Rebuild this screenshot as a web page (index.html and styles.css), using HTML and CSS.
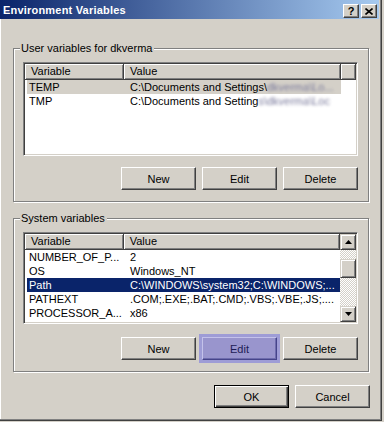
FILE: index.html
```html
<!DOCTYPE html>
<html lang="en">

<head>
    <meta charset="UTF-8">
    <meta name="viewport" content="width=device-width, initial-scale=1.0">
    <title>Environment Variables</title>
    <link rel="stylesheet" href="styles.css">
</head>

<body>
    <div class="window">
        <div class="titlebar">
            <span class="title">Environment Variables</span>
            <div class="caption">
                <div class="cap-btn help">?</div>
                <div class="cap-btn close">
                    <svg width="8" height="7" viewBox="0 0 8 7"><path d="M0.5 0.5L7.5 6.5M7.5 0.5L0.5 6.5" stroke="#000" stroke-width="1.6" fill="none"/></svg>
                </div>
            </div>
        </div>

        <div class="content">
            <!-- user variables -->
            <div class="group">
                <span class="group-label">User variables for dkverma</span>
                <div class="listview">
                    <div class="lv-main">
                        <div class="lv-head">
                            <div class="col-h c1">Variable</div>
                            <div class="col-h c2">Value</div>
                            <div class="col-h rest"></div>
                        </div>
                        <div class="row grey">
                            <span class="c1">TEMP</span>
                            <span class="c2">C:\Documents and Settings\<span class="smudge">dkverma\Lo...</span></span>
                        </div>
                        <div class="row">
                            <span class="c1">TMP</span>
                            <span class="c2">C:\Documents and Setting<span class="smudge">s\dkverma\Loc</span></span>
                        </div>
                    </div>
                </div>
                <div class="btn-row">
                    <div class="btn">New</div>
                    <div class="btn">Edit</div>
                    <div class="btn">Delete</div>
                </div>
            </div>

            <!-- system variables -->
            <div class="group">
                <span class="group-label">System variables</span>
                <div class="listview short">
                    <div class="lv-main">
                        <div class="lv-head">
                            <div class="col-h c1">Variable</div>
                            <div class="col-h c2">Value</div>
                        </div>
                        <div class="row">
                            <span class="c1">NUMBER_OF_P...</span>
                            <span class="c2">2</span>
                        </div>
                        <div class="row">
                            <span class="c1">OS</span>
                            <span class="c2">Windows_NT</span>
                        </div>
                        <div class="row selected">
                            <span class="c1">Path</span>
                            <span class="c2">C:\WINDOWS\system32;C:\WINDOWS;...</span>
                        </div>
                        <div class="row">
                            <span class="c1">PATHEXT</span>
                            <span class="c2">.COM;.EXE;.BAT;.CMD;.VBS;.VBE;.JS;....</span>
                        </div>
                        <div class="row">
                            <span class="c1">PROCESSOR_A...</span>
                            <span class="c2">x86</span>
                        </div>
                    </div>
                    <div class="scrollbar">
                        <div class="sb-btn">
                            <svg width="7" height="4" viewBox="0 0 7 4"><polygon points="3.5,0 7,4 0,4" fill="#000"/></svg>
                        </div>
                        <div class="sb-track">
                            <div class="sb-thumb"></div>
                        </div>
                        <div class="sb-btn">
                            <svg width="7" height="4" viewBox="0 0 7 4"><polygon points="0,0 7,0 3.5,4" fill="#000"/></svg>
                        </div>
                    </div>
                </div>
                <div class="btn-row low">
                    <div class="btn">New</div>
                    <div class="btn hot">Edit</div>
                    <div class="btn">Delete</div>
                </div>
            </div>

            <div class="dialog-btns">
                <div class="btn default">OK</div>
                <div class="btn">Cancel</div>
            </div>
        </div>
    </div>
</body>

</html>
```

FILE: styles.css
```css
body {
    margin: 0;
    background: #d4d0c8;
    font-family: "Liberation Sans", Arial, sans-serif;
    font-size: 11px;
    color: #000;
}

.window {
    width: 382px;
    height: 421px;
    box-sizing: border-box;
    padding-right: 2px;
    background: #d4d0c8;
    border-right: 1px solid #404040;
    border-bottom: 1px solid #404040;
    box-shadow: inset -1px -1px #808080, inset 1px 0 #fff;
}

.titlebar {
    height: 19px;
    display: flex;
    justify-content: space-between;
    align-items: center;
    padding: 0 2px 0 3px;
    background: linear-gradient(to right, #0a246a, #a6caf0);
    color: #fff;
    font-weight: bold;
}

.title {
    letter-spacing: 0.2px;
}

.caption {
    display: flex;
    gap: 2px;
    align-self: flex-end;
    margin-bottom: 1px;
}

.cap-btn {
    width: 16px;
    height: 14px;
    box-sizing: border-box;
    background: #d4d0c8;
    border: 1px solid;
    border-color: #fff #404040 #404040 #fff;
    box-shadow: inset -1px -1px #808080;
    display: flex;
    justify-content: center;
    align-items: center;
    color: #000;
    font-size: 11px;
    line-height: 12px;
}

.content {
    padding: 29px 0 0 13px;
}

.group {
    position: relative;
    width: 356px;
    box-sizing: border-box;
    border: 1px solid #808080;
    box-shadow: inset 1px 1px #fff, 1px 1px #fff;
    padding: 13px 10px 11px 9px;
}

.group + .group {
    margin-top: 16px;
}

.group-label {
    position: absolute;
    top: -7px;
    left: 6px;
    padding: 0 2px 0 1px;
    background: #d4d0c8;
    line-height: 13px;
}

.listview {
    height: 94px;
    box-sizing: border-box;
    display: flex;
    padding: 1px;
    overflow: hidden;
    background: #fff;
    border: 1px solid;
    border-color: #808080 #fff #fff #808080;
    box-shadow: inset 1px 1px #404040, inset -1px -1px #d4d0c8;
}

.listview.short {
    height: 92px;
}

.lv-main {
    flex: 1;
    min-width: 0;
    display: flex;
    flex-direction: column;
    overflow: hidden;
}

.lv-head {
    display: flex;
    flex-shrink: 0;
    height: 16px;
}

.col-h {
    box-sizing: border-box;
    background: #d4d0c8;
    border-right: 1px solid #404040;
    border-bottom: 1px solid #404040;
    box-shadow: inset 1px 1px #fff, inset -1px -1px #808080;
    padding-left: 6px;
    line-height: 15px;
}

.col-h.c1 {
    width: 99px;
}

.col-h.c2 {
    width: 217px;
}

.col-h.rest {
    flex: 1;
}

.row {
    display: flex;
    flex-shrink: 0;
    width: 314px;
    height: 14px;
    margin-left: 2px;
    line-height: 14px;
    white-space: nowrap;
}

.row .c1 {
    width: 97px;
    box-sizing: border-box;
    padding-left: 2px;
    overflow: hidden;
}

.row .c2 {
    width: 217px;
    box-sizing: border-box;
    padding-left: 6px;
    overflow: hidden;
}

.row.grey {
    background: #d4d0c8;
}

.row.selected {
    background: #0a246a;
    color: #fff;
}

.smudge {
    display: inline-block;
    vertical-align: top;
    color: #7a7a9c;
    filter: blur(1.4px);
}

.scrollbar {
    width: 16px;
    display: flex;
    flex-direction: column;
}

.sb-btn,
.sb-thumb {
    height: 16px;
    box-sizing: border-box;
    background: #d4d0c8;
    border: 1px solid;
    border-color: #d4d0c8 #404040 #404040 #d4d0c8;
    box-shadow: inset 1px 1px #fff, inset -1px -1px #808080;
    display: flex;
    justify-content: center;
    align-items: center;
}

.sb-track {
    flex: 1;
    padding-top: 9px;
    background: repeating-conic-gradient(#d4d0c8 0 25%, #fff 0 50%) 0 0 / 2px 2px;
}

.sb-thumb {
    height: 19px;
}

.btn-row {
    display: flex;
    justify-content: flex-end;
    gap: 6px;
    margin-top: 11px;
}

.btn-row.low {
    margin-top: 13px;
}

.btn {
    width: 75px;
    height: 23px;
    box-sizing: border-box;
    background: #d4d0c8;
    border: 1px solid;
    border-color: #fff #404040 #404040 #fff;
    box-shadow: inset -1px -1px #808080;
    display: flex;
    justify-content: center;
    align-items: center;
}

.btn.hot {
    background: #9995cd;
    color: #1d1b55;
    border-color: #c4c2ea #46448a #46448a #c4c2ea;
    box-shadow: inset -1px -1px #6e6cad, 0 0 0 3px #9e9cd6;
}

.btn.default {
    border-color: #000;
    box-shadow: inset 1px 1px #fff, inset -1px -1px #404040, inset -2px -2px #808080;
}

.dialog-btns {
    width: 357px;
    display: flex;
    justify-content: flex-end;
    gap: 6px;
    margin-top: 13px;
}
```
